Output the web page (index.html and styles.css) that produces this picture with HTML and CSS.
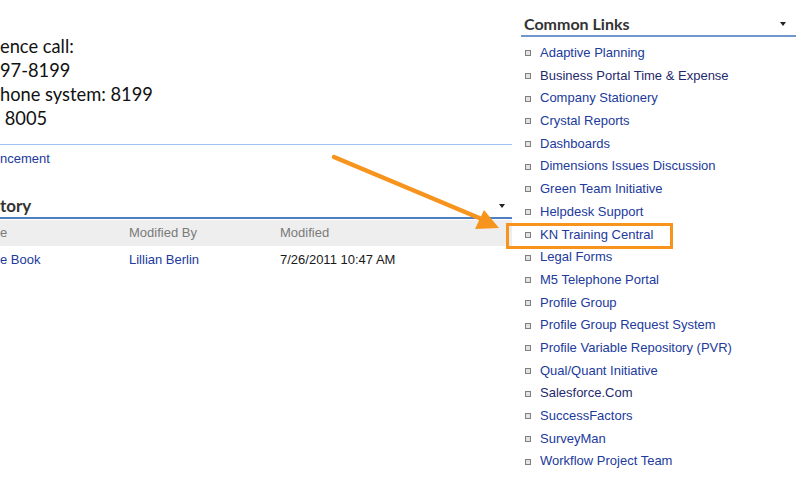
FILE: index.html
```html
<!DOCTYPE html>
<html>
<head>
<meta charset="utf-8">
<link rel="stylesheet" href="styles.css">
</head>
<body>
<div class="page">
  <div class="main">
    <div class="intro">
      <div class="line">ence call:</div>
      <div class="line">97-8199</div>
      <div class="line">hone system: 8199</div>
      <div class="line">&nbsp;8005</div>
    </div>
    <div class="announce"><a class="link">ncement</a></div>
    <div class="part-head">
      <span class="part-title">tory</span>
      <span class="caret"></span>
    </div>
    <div class="grid head-row">
      <span>e</span><span>Modified By</span><span>Modified</span>
    </div>
    <div class="grid data-row">
      <a class="link">e Book</a><a class="link">Lillian Berlin</a><span class="date">7/26/2011 10:47 AM</span>
    </div>
  </div>
  <div class="side">
    <div class="side-head">
      <span class="side-title">Common Links</span>
      <span class="caret"></span>
    </div>
    <ul class="links">
      <li><a class="link">Adaptive Planning</a></li>
      <li><a class="link visited">Business Portal Time &amp; Expense</a></li>
      <li><a class="link">Company Stationery</a></li>
      <li><a class="link">Crystal Reports</a></li>
      <li><a class="link">Dashboards</a></li>
      <li><a class="link">Dimensions Issues Discussion</a></li>
      <li><a class="link">Green Team Initiative</a></li>
      <li><a class="link">Helpdesk Support</a></li>
      <li class="highlight"><a class="link">KN Training Central</a></li>
      <li><a class="link">Legal Forms</a></li>
      <li><a class="link">M5 Telephone Portal</a></li>
      <li><a class="link">Profile Group</a></li>
      <li><a class="link">Profile Group Request System</a></li>
      <li><a class="link">Profile Variable Repository (PVR)</a></li>
      <li><a class="link">Qual/Quant Initiative</a></li>
      <li><a class="link visited">Salesforce.Com</a></li>
      <li><a class="link">SuccessFactors</a></li>
      <li><a class="link">SurveyMan</a></li>
      <li><a class="link">Workflow Project Team</a></li>
    </ul>
  </div>
  <svg class="arrow" width="800" height="480" viewBox="0 0 800 480">
    <line x1="334" y1="157" x2="484" y2="220" stroke="#f7941d" stroke-width="4.5" stroke-linecap="round"/>
    <polygon points="499,228 475,229 484,210" fill="#f7941d"/>
  </svg>
</div>
</body>
</html>
```
FILE: styles.css
```css
html, body {
  margin: 0;
  padding: 0;
  background: #ffffff;
}
.page {
  position: relative;
  width: 800px;
  height: 480px;
  overflow: hidden;
  display: flex;
  font-family: "Liberation Sans", Arial, sans-serif;
}
.main {
  width: 512px;
  flex: none;
}
.intro {
  padding-top: 34px;
  padding-bottom: 14px;
  border-bottom: 1px solid #9fc2ef;
  font-family: Lato, "Open Sans", sans-serif;
  font-size: 18.3px;
  color: #111;
}
.line {
  line-height: 24px;
  height: 24px;
  white-space: pre;
}
.link {
  color: #213a9c;
  text-decoration: none;
}
.link.visited {
  color: #1f2a6c;
}
.announce {
  font-size: 13px;
  line-height: 18px;
  padding-top: 5px;
}
.part-head {
  margin-top: 26px;
  height: 23px;
  border-bottom: 2px solid #4f7fc3;
  display: flex;
  align-items: center;
  justify-content: space-between;
  padding-right: 7px;
}
.part-title, .side-title {
  font-family: Lato, "Open Sans", sans-serif;
  font-weight: bold;
  font-size: 17px;
  color: #333;
}
.caret {
  width: 0;
  height: 0;
  border-left: 3px solid transparent;
  border-right: 3px solid transparent;
  border-top: 4px solid #222;
}
.grid {
  display: grid;
  grid-template-columns: 129px 151px 1fr;
  font-size: 13px;
}
.head-row {
  margin-top: 1px;
  height: 26px;
  line-height: 26px;
  background: #eeeeee;
  color: #7a7a7a;
}
.data-row {
  line-height: 28px;
}
.date {
  color: #1a1a1a;
}
.side {
  width: 275px;
  padding-left: 9px;
  flex: none;
}
.side-head {
  margin-top: 12px;
  height: 23px;
  padding-left: 3px;
  padding-right: 10px;
  border-bottom: 2px solid #7196cc;
  display: flex;
  align-items: center;
  justify-content: space-between;
}
.side-title {
  font-size: 16px;
}
.links {
  list-style: none;
  margin: 5px 0 0 0;
  padding: 0;
  font-size: 13px;
}
.links li {
  height: 22.7px;
  line-height: 22.7px;
  display: flex;
  align-items: center;
  gap: 9px;
  padding-left: 4px;
}
.links li::before {
  content: "";
  width: 4px;
  height: 4px;
  border: 1px solid #7f7f7f;
  background: #e3e3e3;
  flex: none;
}
.links li.highlight {
  position: relative;
}
.links li.highlight::after {
  content: "";
  position: absolute;
  left: -15px;
  top: -1px;
  width: 161px;
  height: 20px;
  border: 3px solid #f7941d;
}
.arrow {
  position: absolute;
  left: 0;
  top: 0;
  pointer-events: none;
}
```
